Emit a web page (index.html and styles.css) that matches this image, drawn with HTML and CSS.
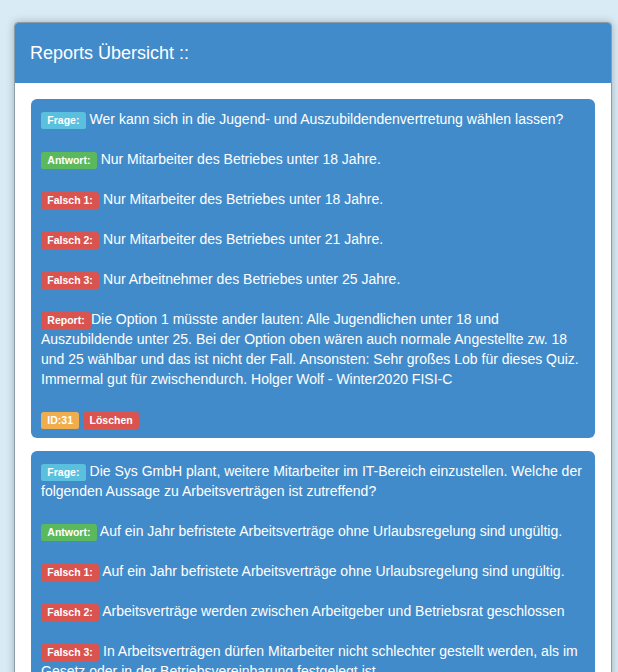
FILE: index.html
```html
<!DOCTYPE html>
<html lang="de">
<head>
<meta charset="utf-8">
<title>Reports Übersicht</title>
<link rel="stylesheet" href="styles.css">
</head>
<body>
<div class="panel">
  <div class="panel-heading">Reports Übersicht ::</div>
  <div class="panel-body">
    <div class="card">
      <div class="row"><span class="label label-info">Frage:</span> Wer kann sich in die Jugend- und Auszubildendenvertretung wählen lassen?</div>
      <div class="row"><span class="label label-success">Antwort:</span> Nur Mitarbeiter des Betriebes unter 18 Jahre.</div>
      <div class="row"><span class="label label-danger">Falsch 1:</span> Nur Mitarbeiter des Betriebes unter 18 Jahre.</div>
      <div class="row"><span class="label label-danger">Falsch 2:</span> Nur Mitarbeiter des Betriebes unter 21 Jahre.</div>
      <div class="row"><span class="label label-danger">Falsch 3:</span> Nur Arbeitnehmer des Betriebes unter 25 Jahre.</div>
      <div class="row"><span class="label label-danger">Report:</span>Die Option 1 müsste ander lauten: Alle Jugendlichen unter 18 und Auszubildende unter 25. Bei der Option oben wären auch normale Angestellte zw. 18 und 25 wählbar und das ist nicht der Fall. Ansonsten: Sehr großes Lob für dieses Quiz. Immermal gut für zwischendurch. Holger Wolf - Winter2020 FISI-C</div>
      <div class="row actions"><span class="label label-warning">ID:31</span> <span class="label label-danger">Löschen</span></div>
    </div>
    <div class="card">
      <div class="row"><span class="label label-info">Frage:</span> Die Sys GmbH plant, weitere Mitarbeiter im IT-Bereich einzustellen. Welche der folgenden Aussage zu Arbeitsverträgen ist zutreffend?</div>
      <div class="row"><span class="label label-success">Antwort:</span> Auf ein Jahr befristete Arbeitsverträge ohne Urlaubsregelung sind ungültig.</div>
      <div class="row"><span class="label label-danger">Falsch 1:</span> Auf ein Jahr befristete Arbeitsverträge ohne Urlaubsregelung sind ungültig.</div>
      <div class="row"><span class="label label-danger">Falsch 2:</span> Arbeitsverträge werden zwischen Arbeitgeber und Betriebsrat geschlossen</div>
      <div class="row"><span class="label label-danger">Falsch 3:</span> In Arbeitsverträgen dürfen Mitarbeiter nicht schlechter gestellt werden, als im Gesetz oder in der Betriebsvereinbarung festgelegt ist.</div>
      <div class="row actions"><span class="label label-warning">ID:32</span> <span class="label label-danger">Löschen</span></div>
    </div>
  </div>
</div>
</body>
</html>
```
FILE: styles.css
```css
html, body {
  margin: 0;
  background: #d9ebf5;
}
body {
  padding: 22px 6px 20px 14px;
  font-family: "Liberation Sans", Arial, Helvetica, sans-serif;
  font-size: 14px;
  line-height: 20px;
  color: #333;
}
.panel {
  background: #fff;
  border: 1px solid #8c9cab;
  border-radius: 4px;
  box-shadow: 0 0 8px rgba(0, 0, 0, 0.25);
  overflow: hidden;
}
.panel-heading {
  background: #428bca;
  color: #fff;
  font-size: 18px;
  line-height: 20px;
  padding: 20px 15px;
}
.panel-body {
  padding: 16px;
}
.card {
  background: #428bca;
  color: #fff;
  border-radius: 6px;
  padding: 10px 10px 9px;
  margin-bottom: 13px;
}
.row {
  margin-bottom: 20px;
}
.row.actions {
  margin-bottom: 0;
}
.label {
  display: inline;
  padding: 0.2em 0.6em 0.3em;
  font-size: 75%;
  font-weight: bold;
  line-height: 1;
  color: #fff;
  border-radius: 0.25em;
  white-space: nowrap;
  vertical-align: baseline;
}
.label-info { background: #5bc0de; }
.label-success { background: #5cb85c; }
.label-danger { background: #d9534f; }
.label-warning { background: #f0ad4e; }
```
